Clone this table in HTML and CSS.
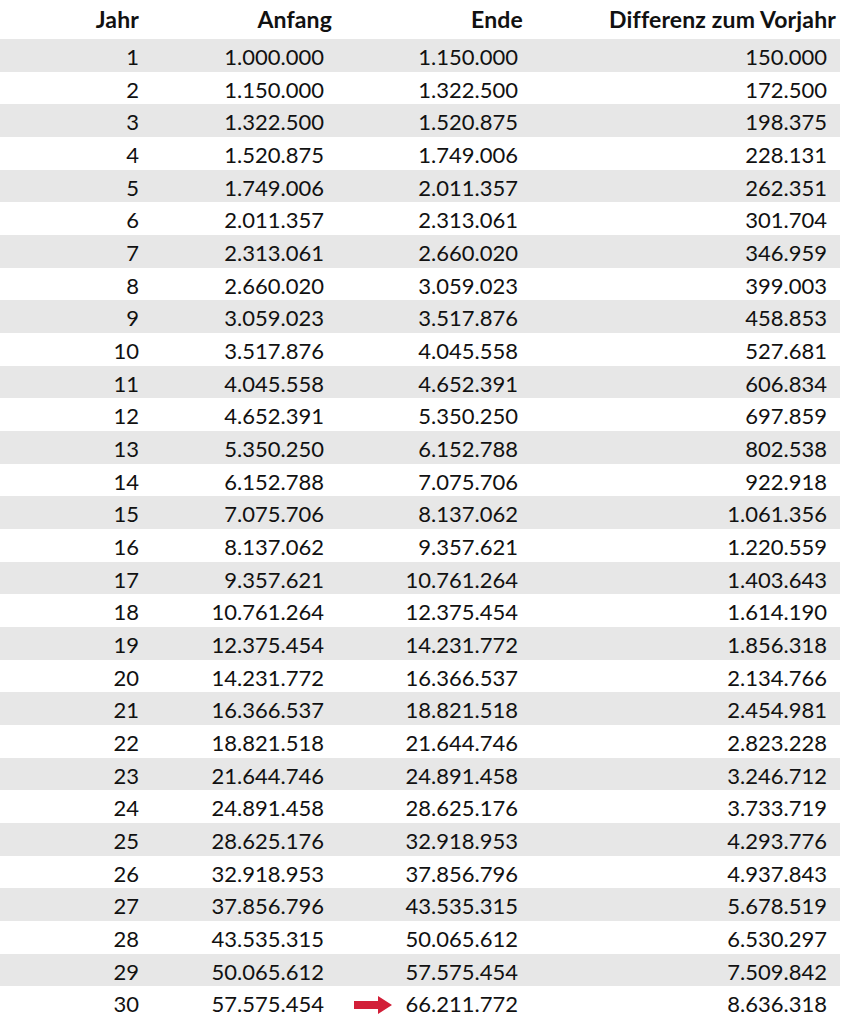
FILE: index.html
```html
<!DOCTYPE html>
<html lang="de">
<head>
<meta charset="utf-8">
<title>Tabelle</title>
<link rel="stylesheet" href="styles.css">
</head>
<body>
<div class="table">
  <div class="row head"><div class="c c1">Jahr</div><div class="c c2">Anfang</div><div class="c c3">Ende</div><div class="c c4">Differenz zum Vorjahr</div></div>
  <div class="row odd"><div class="c c1">1</div><div class="c c2">1.000.000</div><div class="c c3">1.150.000</div><div class="c c4">150.000</div></div>
  <div class="row"><div class="c c1">2</div><div class="c c2">1.150.000</div><div class="c c3">1.322.500</div><div class="c c4">172.500</div></div>
  <div class="row odd"><div class="c c1">3</div><div class="c c2">1.322.500</div><div class="c c3">1.520.875</div><div class="c c4">198.375</div></div>
  <div class="row"><div class="c c1">4</div><div class="c c2">1.520.875</div><div class="c c3">1.749.006</div><div class="c c4">228.131</div></div>
  <div class="row odd"><div class="c c1">5</div><div class="c c2">1.749.006</div><div class="c c3">2.011.357</div><div class="c c4">262.351</div></div>
  <div class="row"><div class="c c1">6</div><div class="c c2">2.011.357</div><div class="c c3">2.313.061</div><div class="c c4">301.704</div></div>
  <div class="row odd"><div class="c c1">7</div><div class="c c2">2.313.061</div><div class="c c3">2.660.020</div><div class="c c4">346.959</div></div>
  <div class="row"><div class="c c1">8</div><div class="c c2">2.660.020</div><div class="c c3">3.059.023</div><div class="c c4">399.003</div></div>
  <div class="row odd"><div class="c c1">9</div><div class="c c2">3.059.023</div><div class="c c3">3.517.876</div><div class="c c4">458.853</div></div>
  <div class="row"><div class="c c1">10</div><div class="c c2">3.517.876</div><div class="c c3">4.045.558</div><div class="c c4">527.681</div></div>
  <div class="row odd"><div class="c c1">11</div><div class="c c2">4.045.558</div><div class="c c3">4.652.391</div><div class="c c4">606.834</div></div>
  <div class="row"><div class="c c1">12</div><div class="c c2">4.652.391</div><div class="c c3">5.350.250</div><div class="c c4">697.859</div></div>
  <div class="row odd"><div class="c c1">13</div><div class="c c2">5.350.250</div><div class="c c3">6.152.788</div><div class="c c4">802.538</div></div>
  <div class="row"><div class="c c1">14</div><div class="c c2">6.152.788</div><div class="c c3">7.075.706</div><div class="c c4">922.918</div></div>
  <div class="row odd"><div class="c c1">15</div><div class="c c2">7.075.706</div><div class="c c3">8.137.062</div><div class="c c4">1.061.356</div></div>
  <div class="row"><div class="c c1">16</div><div class="c c2">8.137.062</div><div class="c c3">9.357.621</div><div class="c c4">1.220.559</div></div>
  <div class="row odd"><div class="c c1">17</div><div class="c c2">9.357.621</div><div class="c c3">10.761.264</div><div class="c c4">1.403.643</div></div>
  <div class="row"><div class="c c1">18</div><div class="c c2">10.761.264</div><div class="c c3">12.375.454</div><div class="c c4">1.614.190</div></div>
  <div class="row odd"><div class="c c1">19</div><div class="c c2">12.375.454</div><div class="c c3">14.231.772</div><div class="c c4">1.856.318</div></div>
  <div class="row"><div class="c c1">20</div><div class="c c2">14.231.772</div><div class="c c3">16.366.537</div><div class="c c4">2.134.766</div></div>
  <div class="row odd"><div class="c c1">21</div><div class="c c2">16.366.537</div><div class="c c3">18.821.518</div><div class="c c4">2.454.981</div></div>
  <div class="row"><div class="c c1">22</div><div class="c c2">18.821.518</div><div class="c c3">21.644.746</div><div class="c c4">2.823.228</div></div>
  <div class="row odd"><div class="c c1">23</div><div class="c c2">21.644.746</div><div class="c c3">24.891.458</div><div class="c c4">3.246.712</div></div>
  <div class="row"><div class="c c1">24</div><div class="c c2">24.891.458</div><div class="c c3">28.625.176</div><div class="c c4">3.733.719</div></div>
  <div class="row odd"><div class="c c1">25</div><div class="c c2">28.625.176</div><div class="c c3">32.918.953</div><div class="c c4">4.293.776</div></div>
  <div class="row"><div class="c c1">26</div><div class="c c2">32.918.953</div><div class="c c3">37.856.796</div><div class="c c4">4.937.843</div></div>
  <div class="row odd"><div class="c c1">27</div><div class="c c2">37.856.796</div><div class="c c3">43.535.315</div><div class="c c4">5.678.519</div></div>
  <div class="row"><div class="c c1">28</div><div class="c c2">43.535.315</div><div class="c c3">50.065.612</div><div class="c c4">6.530.297</div></div>
  <div class="row odd"><div class="c c1">29</div><div class="c c2">50.065.612</div><div class="c c3">57.575.454</div><div class="c c4">7.509.842</div></div>
  <div class="row"><div class="c c1">30</div><div class="c c2">57.575.454</div><div class="c c3 marked"><svg class="arrow" width="38" height="18" viewBox="0 0 38 18" aria-hidden="true"><path d="M0 5H24V0L38 9L24 18V13H0Z" fill="#d21f38"/></svg>66.211.772</div><div class="c c4">8.636.318</div></div>
</div>
</body>
</html>
```

FILE: styles.css
```css
html, body {
  margin: 0;
  padding: 0;
  background: #ffffff;
}

body {
  font-family: Lato, "Liberation Sans", sans-serif;
  font-size: 22px;
  color: #111111;
}

.table {
  width: 840px;
  display: flex;
  flex-direction: column;
}

.row {
  display: grid;
  grid-template-columns: 147px 193px 194px 306px;
  height: 32.68px;
  line-height: 32.68px;
}

.row.head {
  height: 39px;
  line-height: 26px;
  font-weight: 700;
  font-size: 23px;
  letter-spacing: 0.15px;
}

.row.odd {
  background: #e7e7e7;
}

.c {
  text-align: right;
  white-space: nowrap;
  padding-top: 2px;
}

.head .c {
  padding-top: 6px;
}

.c1 { padding-right: 8px; }
.c2 { padding-right: 16px; }
.c3 { padding-right: 16px; }
.c4 { padding-right: 13px; }

.head .c2 { padding-right: 8px; }
.head .c3 { padding-right: 11px; }
.head .c4 { padding-right: 4px; }

.marked {
  position: relative;
}

.arrow {
  position: absolute;
  left: 14px;
  top: 10px;
}
```
